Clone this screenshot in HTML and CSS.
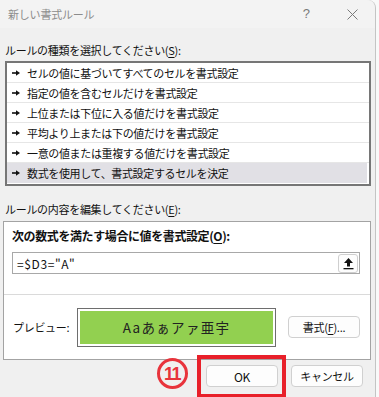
FILE: index.html
```html
<!DOCTYPE html>
<html lang="ja">
<head>
<meta charset="utf-8">
<link rel="stylesheet" href="styles.css">
</head>
<body>
<div class="window">
  <div class="titlebar">
    <span class="title">新しい書式ルール</span>
    <span class="help">?</span>
    <span class="close"><svg width="11" height="11" viewBox="0 0 11 11"><path d="M0.5 0.5 L10.5 10.5 M10.5 0.5 L0.5 10.5" stroke="#7a7a7a" stroke-width="1" fill="none"/></svg></span>
  </div>
  <div class="label first">ルールの種類を選択してください(<u>S</u>):</div>
  <ul class="rules">
    <li><svg class="arr" width="8" height="6" viewBox="0 0 8 6"><rect x="0" y="2.2" width="5" height="1.6" fill="#111"/><path d="M4 0.2 L8 3 L4 5.8 Z" fill="#111"/></svg>セルの値に基づいてすべてのセルを書式設定</li>
    <li><svg class="arr" width="8" height="6" viewBox="0 0 8 6"><rect x="0" y="2.2" width="5" height="1.6" fill="#111"/><path d="M4 0.2 L8 3 L4 5.8 Z" fill="#111"/></svg>指定の値を含むセルだけを書式設定</li>
    <li><svg class="arr" width="8" height="6" viewBox="0 0 8 6"><rect x="0" y="2.2" width="5" height="1.6" fill="#111"/><path d="M4 0.2 L8 3 L4 5.8 Z" fill="#111"/></svg>上位または下位に入る値だけを書式設定</li>
    <li><svg class="arr" width="8" height="6" viewBox="0 0 8 6"><rect x="0" y="2.2" width="5" height="1.6" fill="#111"/><path d="M4 0.2 L8 3 L4 5.8 Z" fill="#111"/></svg>平均より上または下の値だけを書式設定</li>
    <li><svg class="arr" width="8" height="6" viewBox="0 0 8 6"><rect x="0" y="2.2" width="5" height="1.6" fill="#111"/><path d="M4 0.2 L8 3 L4 5.8 Z" fill="#111"/></svg>一意の値または重複する値だけを書式設定</li>
    <li class="selected"><svg class="arr" width="8" height="6" viewBox="0 0 8 6"><rect x="0" y="2.2" width="5" height="1.6" fill="#111"/><path d="M4 0.2 L8 3 L4 5.8 Z" fill="#111"/></svg>数式を使用して、書式設定するセルを決定</li>
  </ul>
  <div class="label second">ルールの内容を編集してください(<u>E</u>):</div>
  <div class="panel">
    <div class="panel-top">
      <div class="bold-label">次の数式を満たす場合に値を書式設定(<u>O</u>):</div>
      <div class="formula">
        <span class="formula-text">=$D3="A"</span>
        <span class="ref-btn"><svg width="11" height="13" viewBox="0 0 11 13"><path d="M5.5 1 L10 6 H7 V9.5 H4 V6 H1 Z" fill="#111"/><rect x="0.5" y="11" width="10" height="1.3" fill="#111"/></svg></span>
      </div>
    </div>
    <div class="panel-bottom">
      <span class="pv-label">プレビュー:</span>
      <div class="preview"><div class="preview-fill">Aaあぁアァ亜宇</div></div>
      <span class="btn fmt-btn">書式(<u>F</u>)...</span>
    </div>
  </div>
  <div class="buttons">
    <span class="btn ok">OK</span>
    <span class="btn cancel">キャンセル</span>
  </div>
  <div class="mark">11</div>
  <div class="redbox"></div>
</div>
</body>
</html>
```
FILE: styles.css
```css
html, body {
  margin: 0;
  padding: 0;
}
body {
  width: 379px;
  height: 397px;
  overflow: hidden;
  background: #f9f9f9;
  font-family: "Noto Sans CJK JP", "Noto Sans", sans-serif;
  color: #111;
}
.window {
  position: relative;
  width: 375px;
  height: 397px;
  background: #f0f0f0;
  border-right: 1px solid #c4c4c4;
  border-top-right-radius: 8px;
  overflow: hidden;
}
.titlebar {
  height: 28px;
  background: #f3f3f3;
  display: flex;
  align-items: center;
  border-top-right-radius: 8px;
}
.title {
  padding-left: 8px;
  font-size: 11px;
  letter-spacing: -0.2px;
  color: #8c8c8c;
}
.help {
  margin-left: auto;
  font-family: "Liberation Sans", sans-serif;
  font-size: 13px;
  color: #7a7a7a;
  margin-top: -1px;
}
.close {
  display: flex;
  margin-left: 37px;
  margin-right: 17px;
}
.label {
  margin-left: 5px;
  font-size: 11px;
  line-height: 16px;
  letter-spacing: -0.3px;
  height: 16px;
}
.label u, .bold-label u, .btn u {
  text-decoration-thickness: 1px;
  text-underline-offset: 2px;
}
.label.first {
  margin-top: 14px;
}
.rules {
  list-style: none;
  margin: 3px 0 0 5px;
  padding: 0;
  width: 362px;
  border: 2px solid #767676;
  background: #fff;
}
.rules li {
  height: 20px;
  box-sizing: border-box;
  border-bottom: 1px solid #e6e6e6;
  display: flex;
  align-items: center;
  padding-left: 5px;
  font-size: 11px;
  letter-spacing: -0.35px;
}
.rules li:last-child {
  border-bottom: none;
}
.rules li.selected {
  background: #e1e0e5;
  margin: 0 2px 1px 0;
}
.arr {
  margin-right: 7px;
  flex: none;
}
.label.second {
  margin-top: 15px;
}
.panel {
  margin: 4px 0 0 3px;
  width: 366px;
  background: #fff;
  border: 1px solid #a3a3a3;
}
.panel-top {
  padding: 6px 10px 20px 8px;
  border-bottom: 1px solid #dadada;
}
.bold-label {
  font-size: 12px;
  font-weight: bold;
  line-height: 16px;
  letter-spacing: -0.4px;
}
.formula {
  margin-top: 8px;
  height: 22px;
  box-sizing: border-box;
  border: 1px solid #a8a8a8;
  display: flex;
  align-items: center;
  padding: 0 1px 0 4px;
}
.formula-text {
  font-size: 12px;
  letter-spacing: 0.6px;
}
.ref-btn {
  margin-left: auto;
  width: 20px;
  height: 19px;
  box-sizing: border-box;
  border: 1px solid #cfcfcf;
  border-radius: 3px;
  background: #fdfdfd;
  display: flex;
  align-items: center;
  justify-content: center;
}
.panel-bottom {
  height: 64px;
  display: flex;
  align-items: center;
  padding: 0 0 0 9px;
}
.pv-label {
  font-size: 11px;
  letter-spacing: -0.3px;
  width: 64px;
}
.preview {
  width: 199px;
  height: 39px;
  box-sizing: border-box;
  border: 1px solid #6e6e6e;
  padding: 2px;
  background: #fff;
}
.preview-fill {
  height: 100%;
  background: #92d050;
  display: flex;
  align-items: center;
  justify-content: center;
  font-size: 13.5px;
  letter-spacing: 1.3px;
  color: #222;
}
.btn {
  display: flex;
  align-items: center;
  justify-content: center;
  box-sizing: border-box;
  border: 1px solid #d0d0d0;
  border-radius: 4px;
  background: #fdfdfd;
  font-size: 11px;
  letter-spacing: -0.3px;
}
.btn.ok {
  font-size: 12px;
}
.fmt-btn {
  margin-left: 12px;
  width: 72px;
  height: 22px;
}
.buttons {
  margin-top: 5px;
  display: flex;
  justify-content: flex-end;
  gap: 13px;
  padding-right: 12px;
}
.buttons .btn {
  width: 72px;
  height: 22px;
}
.mark {
  position: absolute;
  left: 157px;
  top: 358px;
  width: 31px;
  height: 31px;
  box-sizing: border-box;
  border: 3px solid #e8343c;
  border-radius: 50%;
  color: #e8343c;
  font-family: "Liberation Sans", sans-serif;
  font-weight: bold;
  font-size: 18px;
  letter-spacing: -1.5px;
  display: flex;
  align-items: center;
  justify-content: center;
  padding-right: 1px;
  line-height: 1;
}
.redbox {
  position: absolute;
  left: 197px;
  top: 355px;
  width: 89px;
  height: 42px;
  box-sizing: border-box;
  border: 4px solid #e8202a;
  border-bottom-width: 3px;
}
```
